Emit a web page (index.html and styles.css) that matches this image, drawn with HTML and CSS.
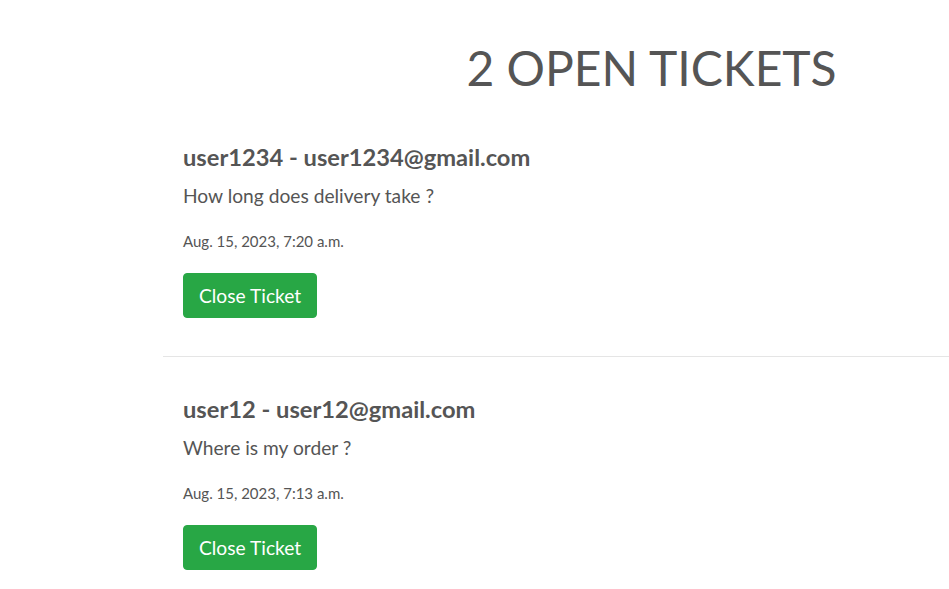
FILE: index.html
```html
<!DOCTYPE html>
<html>
<head>
<meta charset="utf-8">
<link rel="stylesheet" href="styles.css">
</head>
<body>
<main class="main">
  <h1 class="page-title">2 OPEN TICKETS</h1>
  <section class="ticket">
    <h4 class="ticket-title">user1234 - user1234@gmail.com</h4>
    <p class="ticket-message">How long does delivery take ?</p>
    <p class="ticket-date">Aug. 15, 2023, 7:20 a.m.</p>
    <button class="btn-close">Close Ticket</button>
  </section>
  <hr class="divider">
  <section class="ticket">
    <h4 class="ticket-title">user12 - user12@gmail.com</h4>
    <p class="ticket-message">Where is my order ?</p>
    <p class="ticket-date">Aug. 15, 2023, 7:13 a.m.</p>
    <button class="btn-close">Close Ticket</button>
  </section>
</main>
</body>
</html>
```
FILE: styles.css
```css
html, body {
  margin: 0;
  padding: 0;
  background: #fff;
  overflow: hidden;
}
body {
  font-family: Lato, "Open Sans", sans-serif;
  color: #555;
}
.main {
  margin-left: 163px;
  width: 977px;
}
.page-title {
  margin: 0 0 7px;
  padding-top: 38px;
  text-align: center;
  font-size: 48px;
  font-weight: 400;
  line-height: 60px;
  color: #555;
}
.ticket {
  display: flex;
  flex-direction: column;
  align-items: flex-start;
  padding: 38px 20px 38px;
}
.ticket-title {
  margin: 0;
  font-size: 23.7px;
  font-weight: 700;
  line-height: 29px;
}
.ticket-message {
  margin: 10px 0 0;
  font-size: 19.2px;
  line-height: 28px;
}
.ticket-date {
  margin: 20px 0 0;
  font-size: 15px;
  line-height: 22px;
}
.btn-close {
  margin-top: 21px;
  font-family: Lato, sans-serif;
  font-size: 19.2px;
  line-height: 29px;
  padding: 7px 15px 7px;
  color: #fff;
  background: #28a745;
  border: 1px solid #28a745;
  border-radius: 4px;
}
.divider {
  margin: 0;
  border: 0;
  border-top: 1px solid #e5e5e5;
}
```
